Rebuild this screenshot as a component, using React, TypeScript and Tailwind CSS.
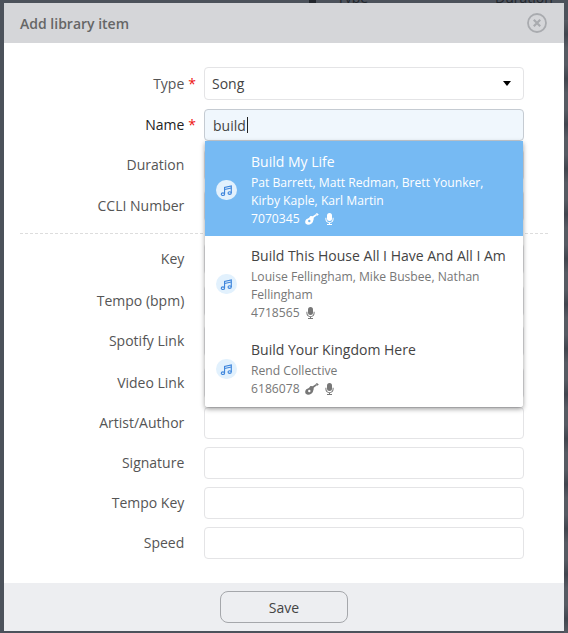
import React from "react";

const Music = ({ className }: { className?: string }) => (
  <svg viewBox="0 0 16 16" className={className} fill="none" stroke="currentColor" strokeWidth="1.4">
    <ellipse cx="3.6" cy="12.6" rx="2" ry="1.6" />
    <ellipse cx="11.9" cy="11.1" rx="2" ry="1.6" />
    <path d="M5.6 12.4V4.2L13.9 2.4V11" />
    <path d="M5.6 6.8L13.9 5" />
  </svg>
);

const Guitar = ({ className }: { className?: string }) => (
  <svg viewBox="0 0 14 12" className={className} fill="currentColor" fillRule="evenodd">
    <path d="M5.500 3C7.500 2.600 9 4 8.700 6c-.2 1-.5 1.400-.7 2.500C7.500 10.500 5 12 2.800 11.800 1 11.600 0 10.300.2 8.600c.2-2 1.800-3 3.200-3.400 1-.3 1.400-1.700 2.100-2.200zM4.300 6.800a1.200 1.200 0 1 0 0 2.400 1.200 1.200 0 0 0 0-2.400z" />
    <path d="M7 3.700L11 1l1 1.300-4 2.900z" />
    <path d="M10.800.7L12 0l1.800 1.500-1.500 1.300z" />
  </svg>
);

const Mic = ({ className }: { className?: string }) => (
  <svg viewBox="0 0 9 12" className={className} fill="currentColor">
    <rect x="2" y="0" width="5" height="8" rx="2.500" />
    <path d="M.4 4.800h1v1.300a3.100 3.100 0 0 0 6.200 0V4.800h1v1.300A4.100 4.100 0 0 1 5 10.100V11h2v1H2v-1h2v-.9A4.100 4.100 0 0 1 .4 6.100z" />
  </svg>
);

function Row({ label, required, dark, children }: { label: string; required?: boolean; dark?: boolean; children?: React.ReactNode }) {
  return (
    <div className="flex items-center">
      <div className={`w-[200px] pr-[8px] text-right text-[14px] leading-[20px] ${dark ? "text-[#222222]" : "text-[#555555]"}`}>
        {label}
        {required ? <span className="ml-[4px] text-[#ee1111]">*</span> : <span className="ml-[4px] invisible">*</span>}
      </div>
      {children ?? <div className="h-[32px] w-[320px] rounded-[4px] border border-[#e4e4e6] bg-white" />}
    </div>
  );
}

function Suggestion({ title, lines, code, guitar, className, metaGap }: { title: string; lines: string[]; code: string; guitar?: boolean; className: string; metaGap: string }) {
  return (
    <div className={`flex items-center pl-[11px] pr-[8px] ${className}`}>
      <div className="flex h-[20px] w-[21px] shrink-0 items-center justify-center rounded-full bg-[#e2f1fd] text-[#3f86dc]">
        <Music className="h-[13px] w-[13px]" />
      </div>
      <div className="ml-[14px] min-w-0">
        <div className="text-[14px] leading-[20px]">{title}</div>
        <div className={`text-[12.15px] leading-[18px] ${metaGap}`}>
          {lines.map((l) => (
            <div key={l}>{l}</div>
          ))}
          <div className="flex items-center">
            {code}
            {guitar && <Guitar className="ml-[5px] h-[12px] w-[14px]" />}
            <Mic className={`h-[12px] w-[9px] ${guitar ? "ml-[6px]" : "ml-[6px]"}`} />
          </div>
        </div>
      </div>
    </div>
  );
}

export default function App() {
  return (
    <div className="relative h-[633px] w-[568px] overflow-hidden bg-[#4c525b] px-[4px] pt-[3px] font-['Open_Sans',sans-serif]">
      <span className="absolute left-[337px] top-[-12px] text-[14px] leading-[20px] text-[#22262c]">Type</span>
      <span className="absolute left-[495px] top-[-12px] text-[14px] leading-[20px] text-[#22262c]">Duration</span>
      <span className="absolute left-[309px] top-0 h-[3px] w-[7px] bg-[#22262c]" />
      <div className="absolute bottom-0 right-0 top-[20px] w-[4px] bg-[repeating-linear-gradient(180deg,#565b63_0px,#41464f_14px,#565b63_28px,#565b63_45px)]" />
      <div className="relative flex h-[628px] flex-col bg-white">
        <div className="flex h-[40px] shrink-0 items-center justify-between bg-[#d5d6d9] pl-[16px] pr-[17px]">
          <span className="text-[14px] font-semibold text-[#666666]">Add library item</span>
          <svg viewBox="0 0 20 20" className="h-[20px] w-[20px] text-[#a9abaf]" fill="none" stroke="currentColor">
            <circle cx="10" cy="10" r="9" strokeWidth="1.800" />
            <path d="M6.800 6.800l6.400 6.400M13.200 6.800l-6.400 6.400" strokeWidth="2.200" />
          </svg>
        </div>

        <div className="relative flex-1 pt-[24px]">
          <div className="flex flex-col">
            <div className="mb-[9px]">
              <Row label="Type" required>
                <div className="flex h-[33px] w-[320px] items-center justify-between rounded-[4px] border border-[#e4e4e6] bg-white pl-[7px] pr-[12px] text-[14px] text-[#444444]">
                  Song
                  <span className="h-0 w-0 border-x-[4.500px] border-t-[5px] border-x-transparent border-t-black" />
                </div>
              </Row>
            </div>
            <div className="mb-[8px]">
              <Row label="Name" required dark>
                <div className="flex h-[32px] w-[320px] items-center rounded-[4px] border border-[#c5cbd2] bg-[#f0f7fd] pl-[8px] text-[14px] text-[#444444]">
                  build<span className="ml-[1px] h-[16px] w-px bg-[#222222]" />
                </div>
              </Row>
            </div>
            <div className="mb-[9px]">
              <Row label="Duration" />
            </div>
            <Row label="CCLI Number" />
            <div className="mx-[16px] mb-[9px] mt-[11px] border-t border-dashed border-[#dddddd]" />
            <div className="flex flex-col gap-[10px]">
              <Row label="Key" />
              <Row label="Tempo (bpm)" />
            </div>
            <div className="mt-[8px] flex flex-col gap-[10px]">
              <Row label="Spotify Link" />
              <Row label="Video Link" />
            </div>
            <div className="mt-[8px] flex flex-col gap-[8px]">
              <Row label="Artist/Author" />
              <Row label="Signature" />
              <Row label="Tempo Key" />
              <Row label="Speed" />
            </div>
          </div>

          <div className="absolute left-[201px] top-[98px] w-[318px] overflow-hidden rounded-b-[3px] bg-white shadow-[0_2px_5px_rgba(0,0,0,0.4)]">
            <Suggestion className="bg-[#76baf3] pt-[11px] pb-[8px] text-white" metaGap="mt-[2px]" title="Build My Life" lines={["Pat Barrett, Matt Redman, Brett Younker,", "Kirby Kaple, Karl Martin"]} code="7070345" guitar />
            <Suggestion className="bg-white pt-[10px] pb-[8px] text-[#444444]" metaGap="mt-[2px] text-[#777777]" title="Build This House All I Have And All I Am" lines={["Louise Fellingham, Mike Busbee, Nathan", "Fellingham"]} code="4718565" />
            <Suggestion className="bg-white pt-[10px] pb-[9px] text-[#444444]" metaGap="mt-[2px] text-[#777777]" title="Build Your Kingdom Here" lines={["Rend Collective"]} code="6186078" guitar />
          </div>
        </div>

        <div className="flex h-[48px] shrink-0 items-center justify-center bg-[#edeef1]">
          <button className="h-[32px] w-[128px] rounded-[8px] border border-[#a5a7ab] text-[14px] text-[#444444]">Save</button>
        </div>
      </div>
    </div>
  );
}
